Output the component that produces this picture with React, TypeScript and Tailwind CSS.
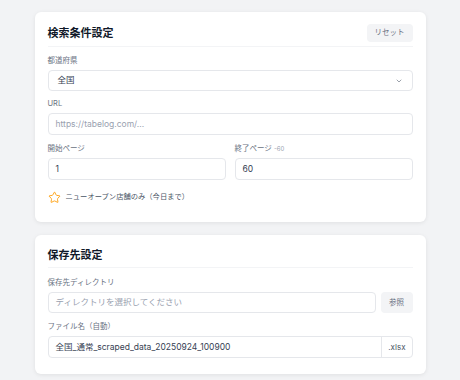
import React from 'react';
import { ChevronDown, Star } from 'lucide-react';

const font = { fontFamily: 'Inter, "Noto Sans CJK JP", sans-serif' };

function Label({ children }: { children: React.ReactNode }) {
    return <div className="text-[7.5px] leading-[10px] text-gray-500 mb-[4px]">{children}</div>;
}

function TextBox({ value, placeholder }: { value?: string; placeholder?: string }) {
    return (
        <div className="h-[22px] w-full rounded-[4px] border border-gray-200 bg-white px-[7px] flex items-center text-[8.5px]">
            {value ? <span className="text-gray-700">{value}</span> : <span className="text-gray-400">{placeholder}</span>}
        </div>
    );
}

export default function App() {
    return (
        <div className="min-h-[380px] w-[460px] bg-[#f2f3f5] pt-[12px] pb-[7px]" style={font}>
            {/* 検索条件 */}
            <div className="mx-auto w-[391px] bg-white rounded-[6px] shadow-[0_1px_4px_rgba(0,0,0,0.08)] px-[13px] pt-[12px] pb-[18px]">
                <div className="flex items-center justify-between pb-[4px] border-b border-gray-100">
                    <h2 className="text-[11px] leading-[18px] font-semibold text-gray-900">検索条件設定</h2>
                    <button className="h-[18px] px-[8px] rounded-[4px] bg-gray-100 text-[7.5px] text-gray-500">リセット</button>
                </div>

                <div className="mt-[9px]">
                    <Label>都道府県</Label>
                    <div className="h-[21px] rounded-[4px] border border-gray-200 bg-white px-[9px] flex items-center justify-between text-[8.5px] text-gray-700">
                        <span>全国</span>
                        <ChevronDown className="w-[8px] h-[8px] text-gray-500" strokeWidth={2} />
                    </div>
                </div>

                <div className="mt-[8px]">
                    <Label>URL</Label>
                    <TextBox placeholder="https://tabelog.com/..." />
                </div>

                <div className="mt-[9px] grid grid-cols-2 gap-[9px]">
                    <div>
                        <Label>開始ページ</Label>
                        <TextBox value="1" />
                    </div>
                    <div>
                        <Label>
                            終了ページ <span className="text-[6px] text-gray-400">-60</span>
                        </Label>
                        <TextBox value="60" />
                    </div>
                </div>

                <div className="mt-[11px] flex items-center gap-[5px]">
                    <Star className="w-[13px] h-[13px] text-amber-500" strokeWidth={1.6} />
                    <span className="text-[7.3px] text-gray-600">ニューオープン店舗のみ（今日まで）</span>
                </div>
            </div>

            {/* 保存先 */}
            <div className="mx-auto mt-[13px] w-[391px] bg-white rounded-[6px] shadow-[0_1px_4px_rgba(0,0,0,0.08)] px-[13px] pt-[12px] pb-[16px]">
                <div className="pb-[4px] border-b border-gray-100">
                    <h2 className="text-[11px] leading-[16px] font-semibold text-gray-900">保存先設定</h2>
                </div>

                <div className="mt-[10px]">
                    <Label>保存先ディレクトリ</Label>
                    <div className="flex gap-[5px]">
                        <div className="flex-1">
                            <div className="h-[21px] rounded-[4px] border border-gray-200 bg-white px-[7px] flex items-center text-[8.5px] text-gray-400">
                                ディレクトリを選択してください
                            </div>
                        </div>
                        <button className="h-[21px] w-[32px] rounded-[4px] bg-gray-100 text-[7.5px] text-gray-500">参照</button>
                    </div>
                </div>

                <div className="mt-[9px]">
                    <Label>ファイル名（自動）</Label>
                    <div className="h-[22px] rounded-[4px] border border-gray-200 bg-white flex items-center text-[8.5px]">
                        <span className="flex-1 px-[7px] text-gray-700">全国_通常_scraped_data_20250924_100900</span>
                        <span className="h-full flex items-center px-[6px] border-l border-gray-200 text-gray-600 text-[8px]">.xlsx</span>
                    </div>
                </div>
            </div>
        </div>
    );
}
